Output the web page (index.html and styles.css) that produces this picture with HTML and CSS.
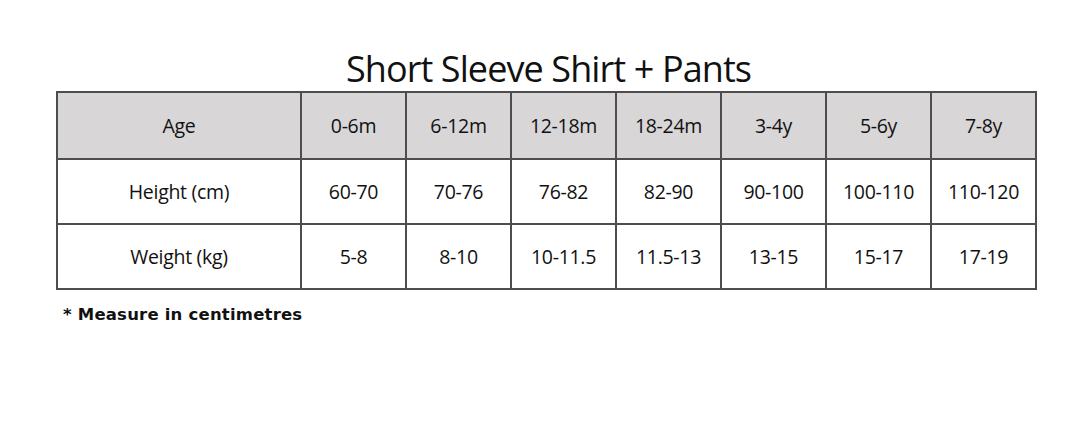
FILE: index.html
```html
<!DOCTYPE html>
<html>
<head>
<meta charset="utf-8">
<link rel="stylesheet" href="styles.css">
</head>
<body>
<div class="page">
  <h1 class="title">Short Sleeve Shirt + Pants</h1>
  <table class="size-table">
    <tr class="head">
      <td class="first">Age</td><td>0-6m</td><td>6-12m</td><td>12-18m</td><td>18-24m</td><td>3-4y</td><td>5-6y</td><td>7-8y</td>
    </tr>
    <tr>
      <td class="first">Height (cm)</td><td>60-70</td><td>70-76</td><td>76-82</td><td>82-90</td><td>90-100</td><td>100-110</td><td>110-120</td>
    </tr>
    <tr>
      <td class="first">Weight (kg)</td><td>5-8</td><td>8-10</td><td>10-11.5</td><td>11.5-13</td><td>13-15</td><td>15-17</td><td>17-19</td>
    </tr>
  </table>
  <p class="note">* Measure in centimetres</p>
</div>
</body>
</html>
```
FILE: styles.css
```css
html, body {
  margin: 0;
  padding: 0;
  background: #ffffff;
}
.page {
  width: 1092px;
  height: 422px;
  padding: 48px 0 0 56px;
  box-sizing: border-box;
  font-family: "Open Sans", "Noto Sans", sans-serif;
  color: #111;
}
.title {
  margin: 0;
  width: 1089px;
  margin-left: -56px;
  padding-left: 8px;
  box-sizing: border-box;
  text-align: center;
  font-weight: 400;
  font-size: 36px;
  line-height: 42px;
  letter-spacing: -0.9px;
}
.size-table {
  border-collapse: collapse;
  width: 979px;
  table-layout: fixed;
  margin-top: 1px;
}
.size-table td {
  border: 2px solid #4d4d4d;
  width: 103px;
  text-align: center;
  font-size: 19.5px;
  height: 63px;
  padding: 0;
  letter-spacing: -0.3px;
}
.size-table td.first {
  width: 242px;
}
.size-table .head td {
  background: #d9d6d8;
  height: 65px;
}
.note {
  margin: 15px 0 0 7px;
  font-family: "DejaVu Sans", sans-serif;
  font-weight: bold;
  font-size: 16.5px;
  letter-spacing: 0.2px;
}
```
